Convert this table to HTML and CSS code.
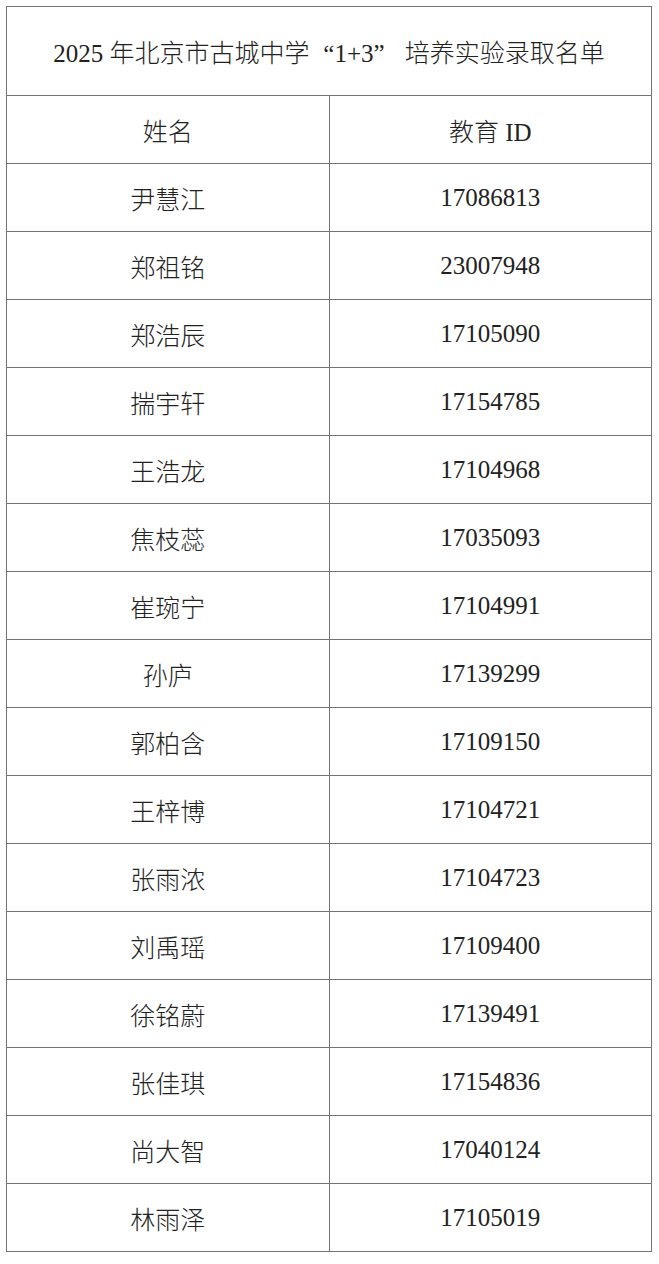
FILE: index.html
```html
<!DOCTYPE html>
<html lang="zh-CN">
<head>
<meta charset="utf-8">
<title>2025年北京市古城中学“1+3”培养实验录取名单</title>
<link rel="stylesheet" href="styles.css">
</head>
<body>
<table class="list">
  <thead>
    <tr class="title-row"><th colspan="2" class="title">2025 年北京市古城中学<span class="q qo">“</span>1+3<span class="q qc">”</span> 培养实验录取名单</th></tr>
    <tr class="row"><th class="c1">姓名</th><th class="c2">教育 ID</th></tr>
  </thead>
  <tbody>
    <tr class="row"><td>尹慧江</td><td>17086813</td></tr>
    <tr class="row"><td>郑祖铭</td><td>23007948</td></tr>
    <tr class="row"><td>郑浩辰</td><td>17105090</td></tr>
    <tr class="row"><td>揣宇轩</td><td>17154785</td></tr>
    <tr class="row"><td>王浩龙</td><td>17104968</td></tr>
    <tr class="row"><td>焦枝蕊</td><td>17035093</td></tr>
    <tr class="row"><td>崔琬宁</td><td>17104991</td></tr>
    <tr class="row"><td>孙庐</td><td>17139299</td></tr>
    <tr class="row"><td>郭柏含</td><td>17109150</td></tr>
    <tr class="row"><td>王梓博</td><td>17104721</td></tr>
    <tr class="row"><td>张雨浓</td><td>17104723</td></tr>
    <tr class="row"><td>刘禹瑶</td><td>17109400</td></tr>
    <tr class="row"><td>徐铭蔚</td><td>17139491</td></tr>
    <tr class="row"><td>张佳琪</td><td>17154836</td></tr>
    <tr class="row"><td>尚大智</td><td>17040124</td></tr>
    <tr class="row"><td>林雨泽</td><td>17105019</td></tr>
  </tbody>
</table>
</body>
</html>
```
FILE: styles.css
```css
html, body {
  margin: 0;
  padding: 0;
  background: #ffffff;
}
body {
  padding: 6px 0 0 6px;
}
.list {
  border-collapse: collapse;
  width: 646px;
  table-layout: fixed;
  font-family: "Liberation Serif", "Noto Sans CJK SC", serif;
  font-size: 25px;
  font-weight: 300;
  color: #222222;
}
.list th, .list td {
  border: 1px solid #737373;
  padding: 0;
  text-align: center;
  vertical-align: middle;
  font-weight: 300;
}
.c1 { width: 322px; }
.c2 { width: 324px; }
.title-row { height: 89px; }
.title { font-size: 25px; white-space: nowrap; }
.q {
  display: inline-block;
  width: 1em;
}
.qo { text-align: right; }
.qc { text-align: left; }
.row { height: 68px; }
```
